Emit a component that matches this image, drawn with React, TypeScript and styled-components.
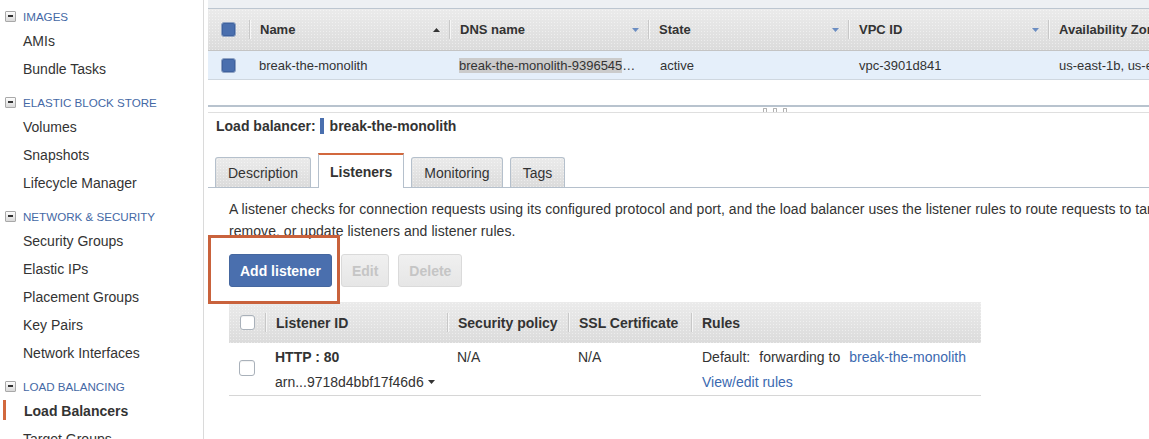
import React from 'react'
import styled, { createGlobalStyle, css } from 'styled-components'

const GlobalStyle = createGlobalStyle`
  html, body { margin: 0; padding: 0; background: #fff; }
  body { font-family: "Liberation Sans", Arial, Helvetica, sans-serif; color: #333; }
  * { box-sizing: border-box; }
`

const headerBg = css`
  background-image: radial-gradient(circle, rgba(255, 255, 255, 0.45) 0.6px, transparent 0.8px),
    linear-gradient(#ebebeb, #dbdbdb);
  background-size: 3px 3px, 100% 100%;
`

const Page = styled.div`
  display: flex;
  width: 1149px;
  height: 439px;
  overflow: hidden;
`

/* ---------- sidebar ---------- */

const Sidebar = styled.nav`
  width: 204px;
  flex: none;
  border-right: 1px solid #dadada;
  padding-top: 5px;
`

const Section = styled.div`
  & + & { margin-top: 8px; }
`

const SectionHeader = styled.div`
  display: flex;
  align-items: center;
  gap: 7px;
  height: 22px;
  padding-left: 5px;
  font-size: 11.6px;
  color: #4468a5;
  text-transform: uppercase;
`

const Toggle = styled.span`
  width: 11px;
  height: 11px;
  border: 1px solid #a9a9a9;
  border-radius: 1px;
  background: linear-gradient(#fdfdfd, #d9d9d9);
  display: flex;
  align-items: center;
  justify-content: center;
  &::after {
    content: '';
    width: 5px;
    height: 2px;
    background: #333;
  }
`

const NavItem = styled.div<{ $active?: boolean }>`
  height: 28px;
  display: flex;
  align-items: center;
  padding-left: 23px;
  font-size: 14px;
  color: #333;
  white-space: nowrap;
  ${p => p.$active && css`
    font-weight: bold;
    padding-left: 24px;
    background: linear-gradient(#d2683d, #d2683d) 3px 3px / 3px 20px no-repeat;
  `}
`

/* ---------- main ---------- */

const Main = styled.main`
  flex: 1;
  min-width: 0;
  overflow: hidden;
  display: flex;
  flex-direction: column;
  padding-left: 4px;
`

const TopStrip = styled.div`
  height: 9px;
  background: #edf0f3;
  border-bottom: 1px solid #bcc6d0;
  width: 1000px;
`

const GridRow = styled.div<{ $cols: string }>`
  display: grid;
  grid-template-columns: ${p => p.$cols};
  align-items: center;
`

const TopHead = styled(GridRow)`
  height: 42px;
  width: 1000px;
  ${headerBg};
  border-bottom: 1px solid #c4c4c4;
`

const HeadCell = styled.div<{ $size?: number }>`
  height: 19px;
  display: flex;
  align-items: center;
  justify-content: space-between;
  padding: 0 9px 0 10px;
  border-left: 1px solid #c8c8c8;
  box-shadow: inset 1px 0 #f6f6f6;
  font-weight: bold;
  font-size: ${p => p.$size ?? 13}px;
  color: #333;
  white-space: nowrap;
`

const CheckCell = styled.div`
  display: flex;
  justify-content: center;
`

const TopRow = styled(GridRow)`
  height: 29px;
  width: 1000px;
  background: #e5effa;
  border-bottom: 1px solid #cfd7df;
  font-size: 13px;
  color: #333;
`

const Cell = styled.div<{ $pad?: number }>`
  padding-left: ${p => p.$pad ?? 10}px;
  white-space: nowrap;
  overflow: hidden;
`

const Selected = styled.span`
  background: #cbcbcb;
`

const Check = styled.span<{ $checked?: boolean; $size?: number }>`
  display: block;
  width: ${p => p.$size ?? 15}px;
  height: ${p => p.$size ?? 15}px;
  border-radius: 3px;
  border: 1px solid ${p => (p.$checked ? '#8fa3c4' : '#a9b1ba')};
  background: ${p => (p.$checked ? '#4a6fae' : '#fff')};
  box-shadow: ${p => (p.$checked ? 'inset 0 0 0 1px #3f629f' : 'inset 0 1px 1px rgba(0,0,0,0.06)')};
`

const Splitter = styled.div`
  margin-top: 25px;
  height: 8px;
  border-top: 2px solid #b8c3ce;
  border-bottom: 1px solid #dfdfdf;
  display: flex;
  align-items: flex-end;
  gap: 6px;
  padding-left: 555px;
`

const Grip = styled.span`
  width: 4px;
  height: 4px;
  border: 1px solid #b2b2b2;
  border-bottom: none;
  border-radius: 1px 1px 0 0;
`

const Title = styled.div`
  margin-top: 4px;
  height: 18px;
  display: flex;
  align-items: center;
  padding-left: 8px;
  font-size: 14px;
  font-weight: bold;
  color: #333;
`

const Marker = styled.span`
  width: 4px;
  height: 16px;
  background: #4a6fae;
  margin: 0 6px 0 4px;
`

const TabBar = styled.div`
  margin-top: 18px;
  height: 35px;
  display: flex;
  align-items: flex-end;
  gap: 7px;
  padding-left: 7px;
  border-bottom: 1px solid #b5c0cc;
`

const Tab = styled.div<{ $active?: boolean }>`
  height: 30px;
  padding: 0 12px;
  display: flex;
  align-items: center;
  font-size: 14px;
  color: #333;
  border: 1px solid #b5c0cc;
  border-bottom: none;
  border-radius: 3px 3px 0 0;
  ${headerBg};
  ${p => p.$active && css`
    height: 35px;
    margin-bottom: -1px;
    padding: 0 11px;
    background: #fff;
    border-top: 2px solid #d2683d;
    border-radius: 0;
    font-weight: bold;
  `}
`

const Panel = styled.div`
  padding-left: 21px;
`

const Intro = styled.p`
  margin: 10px 0 0;
  font-size: 14px;
  line-height: 22px;
  color: #333;
  white-space: nowrap;
  letter-spacing: 0.05px;
`

const ButtonRow = styled.div`
  position: relative;
  margin-top: 12px;
  display: flex;
  gap: 9px;
`

const Button = styled.button<{ $primary?: boolean }>`
  height: 33px;
  padding: 0 10px;
  border-radius: 3px;
  font-family: inherit;
  font-size: 14px;
  font-weight: bold;
  ${p => p.$primary
    ? css`
      background: #4a6fae;
      border: 1px solid #45679f;
      color: #fff;
    `
    : css`
      background: linear-gradient(#f0f0f0, #e6e6e6);
      border: 1px solid #dadada;
      color: #c5c5c5;
    `}
`

const Highlight = styled.div`
  position: absolute;
  left: -21px;
  top: -19px;
  width: 132px;
  height: 69px;
  border: 3px solid #c9623c;
  pointer-events: none;
`

const ListenerTable = styled.div`
  margin-top: 15px;
  width: 752px;
`

const ListenerHead = styled(GridRow)`
  height: 41px;
  ${headerBg};
`

const ListenerRow = styled(GridRow)`
  align-items: start;
  height: 53px;
  border-bottom: 1px solid #d6d6d6;
  font-size: 14px;
  color: #333;
`

const RowCell = styled.div<{ $pad?: number }>`
  padding: 5px 0 0 ${p => p.$pad ?? 10}px;
  display: flex;
  flex-direction: column;
  gap: 7px;
  white-space: nowrap;
`

const Line = styled.div<{ $bold?: boolean }>`
  height: 18px;
  display: flex;
  align-items: center;
  font-weight: ${p => (p.$bold ? 'bold' : 'normal')};
`

const Gap = styled.span`
  margin-right: 9px;
`

const Link = styled.a`
  color: #3b69b0;
  text-decoration: none;
`

const RowCheck = styled(CheckCell)`
  align-self: center;
  padding-bottom: 2px;
`

function Arrow({ up, color }: { up?: boolean; color: string }) {
  return (
    <svg width="7" height="4" viewBox="0 0 7 4" style={{ flex: 'none' }}>
      <path d={up ? 'M0 4 L3.5 0 L7 4Z' : 'M0 0 L7 0 L3.5 4Z'} fill={color} />
    </svg>
  )
}

const nav = [
  { title: 'Images', items: ['AMIs', 'Bundle Tasks'] },
  { title: 'Elastic Block Store', items: ['Volumes', 'Snapshots', 'Lifecycle Manager'] },
  { title: 'Network & Security', items: ['Security Groups', 'Elastic IPs', 'Placement Groups', 'Key Pairs', 'Network Interfaces'] },
  { title: 'Load Balancing', items: ['Load Balancers', 'Target Groups'] },
]

const topCols = '41px 200px 199px 200px 200px 160px'
const listenerCols = '36px 182px 121px 123px 290px'

export default function App() {
  return (
    <>
      <GlobalStyle />
      <Page>
        <Sidebar>
          {nav.map(s => (
            <Section key={s.title}>
              <SectionHeader><Toggle />{s.title}</SectionHeader>
              {s.items.map(i => (
                <NavItem key={i} $active={i === 'Load Balancers'}>{i}</NavItem>
              ))}
            </Section>
          ))}
        </Sidebar>

        <Main>
          <TopStrip />
          <TopHead $cols={topCols}>
            <CheckCell><Check $checked /></CheckCell>
            <HeadCell>Name <Arrow up color="#333" /></HeadCell>
            <HeadCell>DNS name <Arrow color="#6b8dc2" /></HeadCell>
            <HeadCell>State <Arrow color="#6b8dc2" /></HeadCell>
            <HeadCell>VPC ID <Arrow color="#6b8dc2" /></HeadCell>
            <HeadCell>Availability Zones</HeadCell>
          </TopHead>
          <TopRow $cols={topCols}>
            <CheckCell><Check $checked /></CheckCell>
            <Cell>break-the-monolith</Cell>
            <Cell><Selected>break-the-monolith-9396545</Selected>…</Cell>
            <Cell $pad={12}>active</Cell>
            <Cell $pad={11}>vpc-3901d841</Cell>
            <Cell $pad={11}>us-east-1b, us-east-1a</Cell>
          </TopRow>

          <Splitter><Grip /><Grip /><Grip /></Splitter>

          <Title>Load balancer:<Marker />break-the-monolith</Title>

          <TabBar>
            <Tab>Description</Tab>
            <Tab $active>Listeners</Tab>
            <Tab>Monitoring</Tab>
            <Tab>Tags</Tab>
          </TabBar>

          <Panel>
            <Intro>
              A listener checks for connection requests using its configured protocol and port, and the load balancer uses the listener rules to route requests to targets. You can add,
              <br />
              remove, or update listeners and listener rules.
            </Intro>

            <ButtonRow>
              <Highlight />
              <Button $primary>Add listener</Button>
              <Button disabled>Edit</Button>
              <Button disabled>Delete</Button>
            </ButtonRow>

            <ListenerTable>
              <ListenerHead $cols={listenerCols}>
                <CheckCell><Check /></CheckCell>
                <HeadCell $size={14}>Listener ID</HeadCell>
                <HeadCell $size={14}>Security policy</HeadCell>
                <HeadCell $size={14}>SSL Certificate</HeadCell>
                <HeadCell $size={14}>Rules</HeadCell>
              </ListenerHead>
              <ListenerRow $cols={listenerCols}>
                <RowCheck><Check $size={16} /></RowCheck>
                <RowCell>
                  <Line $bold>HTTP : 80</Line>
                  <Line>arn...9718d4bbf17f46d6&nbsp;<Arrow color="#333" /></Line>
                </RowCell>
                <RowCell><Line>N/A</Line></RowCell>
                <RowCell><Line>N/A</Line></RowCell>
                <RowCell $pad={11}>
                  <Line><Gap>Default:</Gap><Gap>forwarding to</Gap><Link>break-the-monolith</Link></Line>
                  <Line><Link>View/edit rules</Link></Line>
                </RowCell>
              </ListenerRow>
            </ListenerTable>
          </Panel>
        </Main>
      </Page>
    </>
  )
}
